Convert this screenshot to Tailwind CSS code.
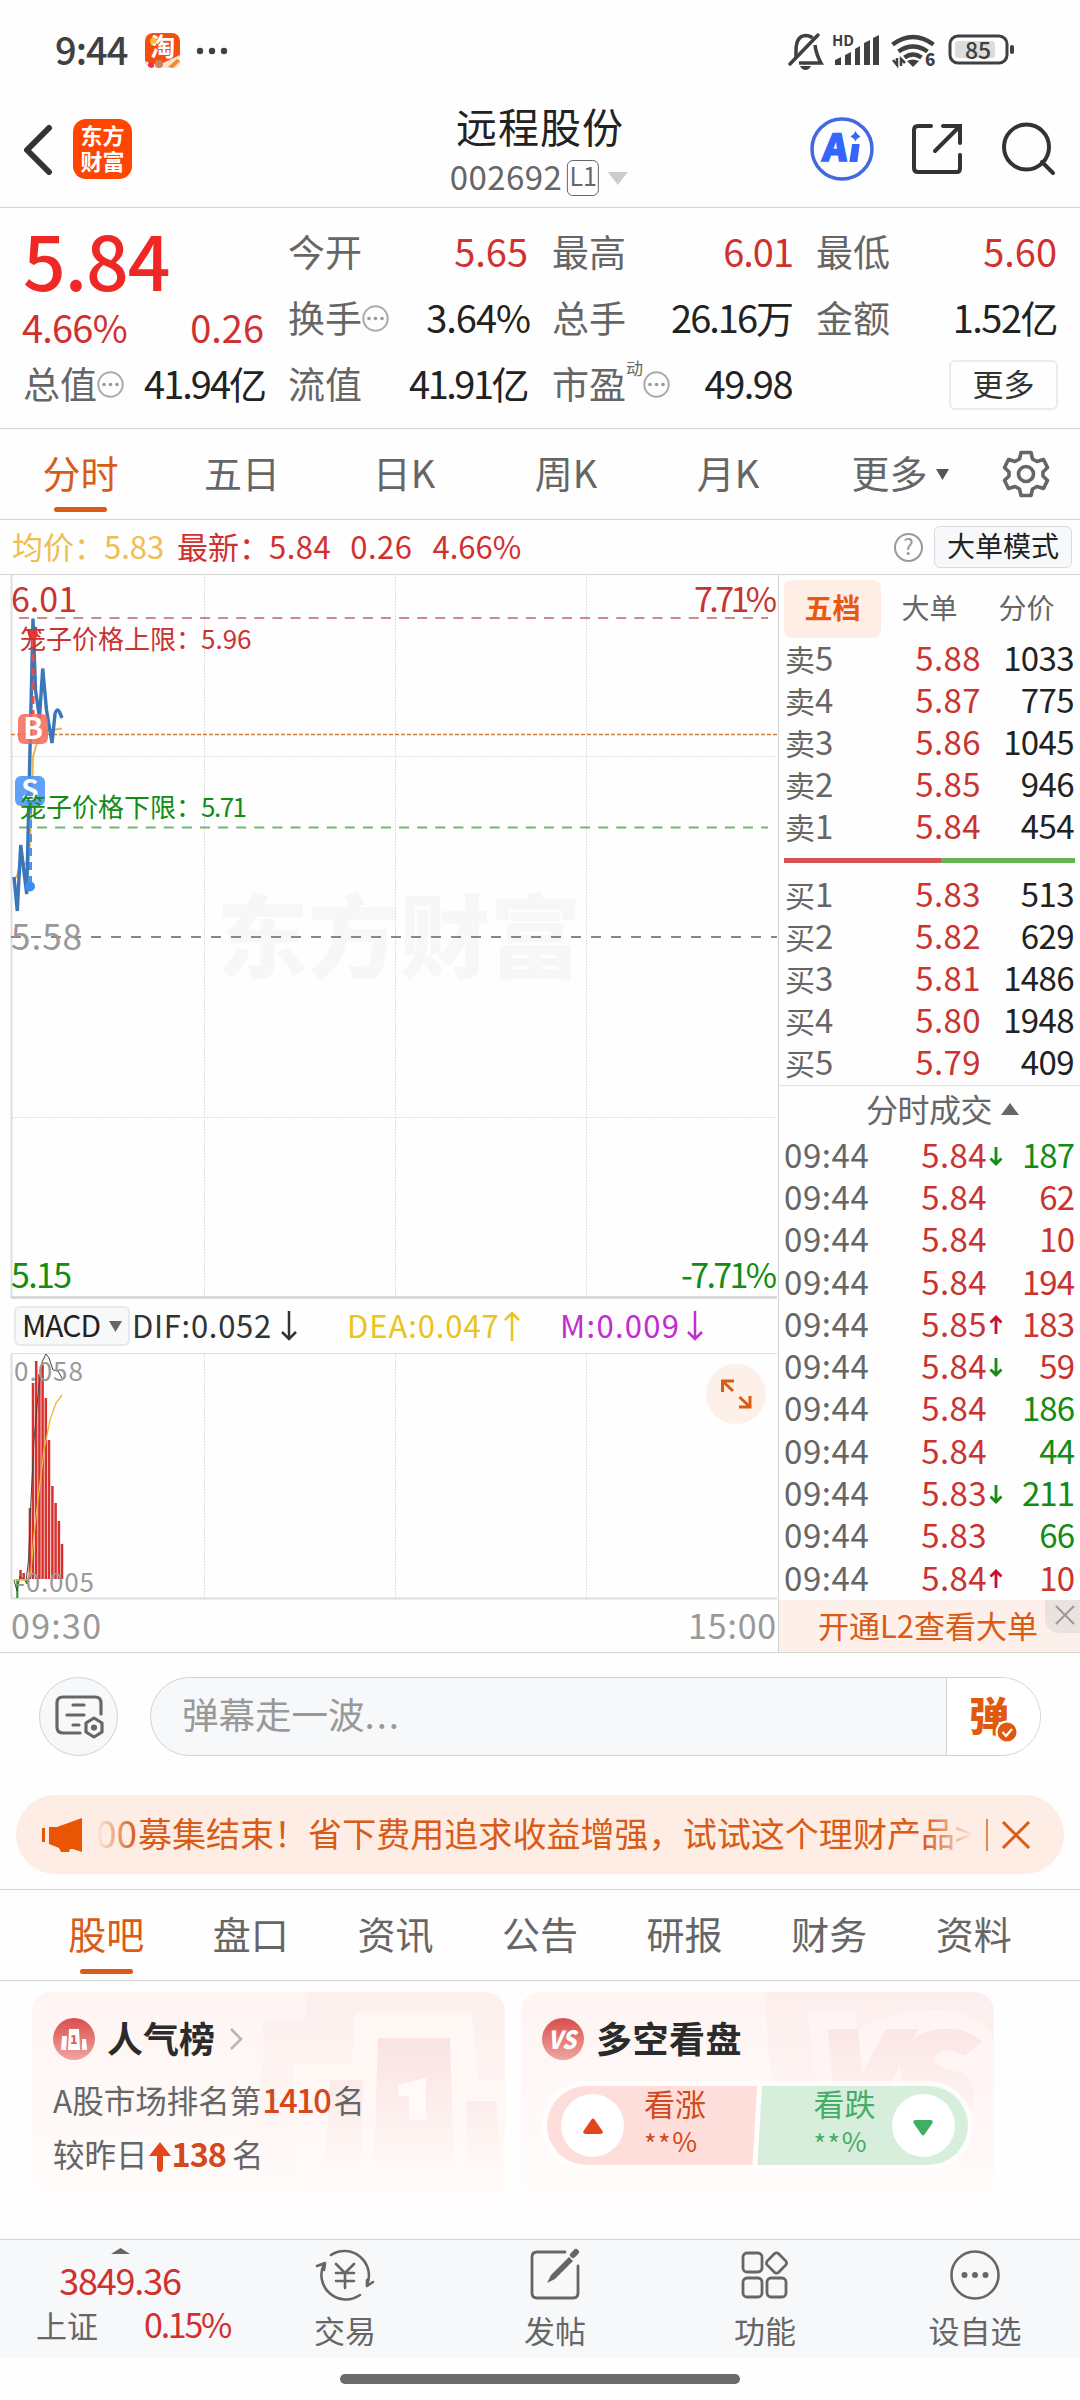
<!doctype html>
<html lang="zh-CN">
  <head>
    <meta charset="UTF-8" />
    <meta name="viewport" content="width=device-width, initial-scale=1.0" />
    <title>远程股份 002692</title>
    <script src="https://cdn.jsdelivr.net/npm/@tailwindcss/browser@4"></script>
  </head>
  <body class="w-[1080px] h-[2400px] overflow-hidden bg-[#fefefe] flex flex-col leading-none text-[#666] whitespace-nowrap font-['Noto_Sans_CJK_SC',sans-serif]">
    <!-- Status bar -->
    <div class="h-[100px] shrink-0 flex items-center pl-[55px] pr-[64px] pt-[1px] text-[#404040]">
      <span class="text-[38px] font-medium tracking-[-1px] pb-[4px]">9:44</span>
      <div class="relative ml-[18px] w-[35px] h-[35px] rounded-[8px] bg-[#f4500c] overflow-hidden flex justify-center">
        <span class="text-[25px] font-bold text-white">淘</span>
        <svg class="absolute left-0 top-0" width="35" height="35">
          <circle cx="8" cy="8" r="3" fill="#ffc21a" />
          <path d="M0 28q10 5 18 2l17-8v13H0z" fill="#ffe3d2" />
          <circle cx="6" cy="32" r="3" fill="#e8304a" />
          <circle cx="14" cy="31" r="4" fill="#c98560" />
          <path d="M23 34l9-8 3 2-7 7z" fill="#f08a30" />
        </svg>
      </div>
      <svg class="ml-[16px]" width="32" height="8" fill="#404040">
        <circle cx="4" cy="4" r="3.2" /><circle cx="16" cy="4" r="3.2" /><circle cx="28" cy="4" r="3.2" />
      </svg>
      <svg class="ml-auto" width="230" height="40" viewBox="786 31 230 40" fill="none" stroke="#404040">
        <path d="M796 58V51q0-15 9.500-15.500 4.500 0 7 2.500M815 45q1 9 6 18H799" stroke-width="3.500" />
        <path d="M790 64L818 35" stroke-width="3.500" stroke-linecap="round" />
        <path d="M800 66h11q-2 4-5.500 4t-5.500-4z" fill="#404040" stroke="none" />
        <g fill="#404040" stroke="none">
          <path d="M835 60l6-3v8h-6zM845 55l6-3v13h-6zM855 49l5-3v19h-5zM864 43l6-3v25h-6zM873 38l6-3v30h-6z" />
          <text x="832" y="46" font-size="15" font-weight="700" font-family="Noto Sans CJK SC">HD</text>
          <text x="925" y="66" font-size="17" font-weight="900" font-family="Noto Sans CJK SC">6</text>
          <path d="M907 61q6-3 12 0l-6 6z" />
        </g>
        <path d="M892.500 44.500q20.500-15 41 0M898.500 51.500q14.500-10 29 0M904.500 57.500q8.500-6 17 0" stroke-width="4.500" />
        <path d="M893 60l4 5v-7M901 66v-7l4 4" stroke-width="2.500" />
        <rect x="950" y="36" width="57" height="27" rx="8" stroke-width="3" />
        <rect x="955" y="41" width="40" height="17" rx="3" fill="#dcdcdc" stroke="none" />
        <rect x="1010" y="45" width="4" height="9" rx="2" fill="#404040" stroke="none" />
        <text x="978" y="58.500" text-anchor="middle" font-size="23" font-weight="500" fill="#404040" stroke="none" font-family="Noto Sans CJK SC">85</text>
      </svg>
    </div>

    <!-- Header -->
    <header class="relative h-[108px] shrink-0 border-b border-[#d4d4d4] flex items-center pl-[22px] pr-[22px]">
      <svg width="32" height="52" class="mb-[9px]" fill="none" stroke="#333" stroke-width="6" stroke-linecap="round" stroke-linejoin="round">
        <path d="M27 5L5 27l22 22" />
      </svg>
      <div class="ml-[19px] mb-[10px] w-[59px] h-[60px] rounded-[13px] bg-[#ff4500] text-white text-[22px] font-bold flex flex-col items-center justify-center gap-[4px] pb-[3px]">
        <span>东方</span><span>财富</span>
      </div>
      <div class="absolute left-1/2 -translate-x-1/2 top-[5px] flex flex-col items-center">
        <h1 class="text-[41px] tracking-[1px] text-[#222]">远程股份</h1>
        <div class="mt-[14px] ml-[-2px] flex items-center text-[33px] h-[36px]">
          <span class="pb-[3px] tracking-[0.400px]">002692</span>
          <span class="ml-[5px] w-[32px] h-[36px] border border-[#666] rounded-[6px] text-[25px] text-center leading-[29px]">L1</span>
          <svg class="ml-[9px]" width="20" height="13"><path d="M0 0h20L10 13z" fill="#ccc" /></svg>
        </div>
      </div>
      <svg class="ml-auto mb-[9px]" width="250" height="66" viewBox="808 116 250 66" fill="none" stroke="#333" stroke-width="4">
        <circle cx="842" cy="149" r="30" stroke="#4169e0" stroke-width="3.500" />
        <text x="841" y="161" font-size="37" font-weight="900" font-family="Noto Sans CJK SC" fill="#3366ff" stroke="#3366ff" stroke-width="1.500" text-anchor="middle" transform="skewX(-6) translate(10 0)">A</text>
        <path d="M853 145h5.500l-2 16h-6z" fill="#3366ff" stroke="#3366ff" stroke-width="2" />
        <path d="M855.500 131q1.500 4 5 5.500-3.500 1.500-5 5-1.500-3.500-5-5 3.500-1.500 5-5.500z" fill="#3366ff" stroke="none" />
        <path d="M931 126H918q-4 0-4 4v38q0 4 4 4h39q3 0 3-4V155M943 126h17v17M959 127l-24 24" stroke-linecap="round" />
        <circle cx="1026.500" cy="147" r="22.500" />
        <path d="M1042 162l11 11" stroke-linecap="round" />
      </svg>
    </header>

    <!-- Quote summary -->
    <section class="h-[221px] shrink-0 border-b border-[#d4d4d4] px-6 pt-[12px] flex gap-6 text-[37px]">
      <div class="w-[240px] flex flex-col">
        <div class="h-[66px] -ml-[1px] mt-[6px] text-[75px] font-medium text-[#ef2725] tracking-[-1px] leading-[66px]">5.84</div>
        <div class="h-[66px] mt-[16px] -mb-[22px] -ml-[2px] flex items-start justify-between text-[38px] text-[#d0312e]"><span class="tracking-[-0.800px]">4.66%</span><span>0.26</span></div>
        <div class="h-[66px] -ml-[1px] pb-[4px] flex items-center justify-between">
          <span class="flex items-center">总值<svg class="mt-[3px]" width="27" height="27"><use href="#more-dot" /></svg></span>
          <span class="text-[38px] text-[#222] tracking-[-2px] -mr-[1px]">41.94亿</span>
        </div>
      </div>
      <div class="w-[240px] flex flex-col">
        <div class="h-[66px] pb-[4px] flex items-center justify-between"><span>今开</span><span class="text-[38px] text-[#d0312e]">5.65</span></div>
        <div class="h-[66px] pb-[4px] flex items-center justify-between">
          <span class="flex items-center">换手<svg class="mt-[3px]" width="27" height="27"><use href="#more-dot" /></svg></span>
          <span class="text-[38px] text-[#222] tracking-[-1px] -mr-[2px]">3.64%</span>
        </div>
        <div class="h-[66px] pb-[4px] flex items-center justify-between"><span>流值</span><span class="text-[38px] text-[#222] tracking-[-2.500px] mr-[1px]">41.91亿</span></div>
      </div>
      <div class="w-[240px] flex flex-col">
        <div class="h-[66px] pb-[4px] flex items-center justify-between"><span>最高</span><span class="text-[38px] text-[#d0312e] tracking-[-1px] -mr-[1px]">6.01</span></div>
        <div class="h-[66px] pb-[4px] flex items-center justify-between"><span>总手</span><span class="text-[38px] text-[#222] tracking-[-2px]">26.16万</span></div>
        <div class="h-[66px] pb-[4px] flex items-center justify-between">
          <span class="flex items-center">市盈<span class="text-[17px] mb-[32px]">动</span><svg class="mt-[3px]" width="27" height="27"><use href="#more-dot" /></svg></span>
          <span class="text-[38px] text-[#222] tracking-[-1.500px]">49.98</span>
        </div>
      </div>
      <div class="w-[240px] flex flex-col">
        <div class="h-[66px] pb-[4px] flex items-center justify-between"><span>最低</span><span class="text-[38px] text-[#d0312e] -mr-[1px]">5.60</span></div>
        <div class="h-[66px] pb-[4px] flex items-center justify-between"><span>金额</span><span class="text-[38px] text-[#222] tracking-[-1.500px] -mr-[1px]">1.52亿</span></div>
        <div class="h-[66px] pb-[1px] flex items-center justify-end"><span class="w-[109px] h-[50px] -mr-[2px] border-2 border-[#ebebeb] rounded-[6px] text-[31px] text-[#333] text-center leading-[42px]">更多</span></div>
      </div>
    </section>

    <!-- Period tabs -->
    <nav class="h-[91px] shrink-0 border-b border-[#d4d4d4] flex items-center text-[38px]">
      <div class="relative w-[161px] h-full flex items-center justify-center pb-[4px] text-[#d95b16]">分时<i class="absolute bottom-[7px] w-[53px] h-[5px] rounded-full bg-[#d95b16]"></i></div>
      <div class="w-[162px] text-center pb-[4px]">五日</div>
      <div class="w-[162px] text-center pb-[4px]">日K</div>
      <div class="w-[162px] text-center pb-[4px]">周K</div>
      <div class="w-[162px] text-center pb-[4px]">月K</div>
      <div class="w-[182px] flex items-center justify-center"><span class="pb-[4px]">更多</span><svg class="ml-[8px]" width="13" height="11"><path d="M0 0h13L6.500 11z" fill="#555" /></svg></div>
      <svg class="ml-[11px]" width="48" height="48" viewBox="-24 -24 48 48" fill="none" stroke="#666" stroke-width="3.600" stroke-linejoin="round">
        <path d="M-5-21.500H5L6.500-15 11-12.500 17.500-14.500 21.500-6.500 17-2V2L21.500 6.500 17.500 14.500 11 12.500 6.500 15 5 21.500H-5L-6.500 15-11 12.500-17.500 14.500-21.500 6.500-17 2V-2L-21.500-6.500-17.500-14.500-11-12.500-6.500-15z" />
        <circle r="7.500" />
      </svg>
    </nav>

    <div class="h-[55px] shrink-0 border-b border-[#d4d4d4] flex items-center pl-[12px] pr-[8px] text-[31px] text-[#d0312e]">
      <span class="pb-[3px] w-[92px] text-[#f0bd50]">均价：</span>
      <span class="pb-[3px] w-[62px] text-[#f0bd50]">5.83</span>
      <span class="pb-[3px] ml-[11px] w-[92px]">最新：</span>
      <span class="pb-[3px] tracking-[0.500px]">5.84</span>
      <span class="pb-[3px] ml-[19px] tracking-[0.500px]">0.26</span>
      <span class="pb-[3px] ml-[20px]">4.66%</span>
      <span class="ml-auto w-[29px] h-[29px] rounded-full border-2 border-[#999] text-[#999] text-[22px] text-center leading-[21px]">?</span>
      <span class="ml-[11px] w-[138px] h-[42px] rounded-[6px] border border-[#d8dbe2] bg-[#f7f8fa] text-[#222] text-[28px] text-center leading-[36px]">大单模式</span>
    </div>

    <!-- Chart and order book -->
    <main class="h-[1078px] shrink-0 border-b border-[#d4d4d4] flex">
      <div class="w-[778px] flex flex-col">
        <svg width="778" height="724" viewBox="0 575 778 724" fill="none" font-family="Noto Sans CJK SC">
          <text x="217" y="971" font-size="91" font-weight="900" fill="#f7f7f7">东方财富</text>
          <path d="M11.500 574V1298" stroke="#dedede" stroke-width="2" />
          <path d="M11 1297.500H777" stroke="#d4d4d4" stroke-width="2.500" />
          <path d="M204.500 574V1297M395.500 574V1297M586.500 574V1297M12 756.500H777M12 1117.500H777" stroke="#d5d5d5" stroke-dasharray="1.500 1.500" />
          <path d="M19 618H768" stroke="#c98b8b" stroke-width="2" stroke-dasharray="10 8.100" />
          <path d="M19 827.500H768" stroke="#74b574" stroke-width="2" stroke-dasharray="10 8.100" />
          <path d="M11 937H777" stroke="#888" stroke-width="2" stroke-dasharray="10 10" />
          <path d="M11 734.500H777" stroke="#c9803f" stroke-width="1.500" stroke-dasharray="4 2" />
          <path d="M14 880L17 876 21 862 25 864 29 860 31 820 33 757 36 746 40 736 46 731 62 728.500" stroke="#eab64b" stroke-width="2" />
          <path d="M14 877L17.300 911 20.700 845 26.700 894 33 618.500 35.500 690 39.500 718 42.700 668.500 46.500 710 52 743 55 714Q57 707 59.500 712L62 718" stroke="#3a76b8" stroke-width="3.400" stroke-linejoin="bevel" />
          <circle cx="33" cy="634" r="5" fill="#ee3a36" />
          <path d="M33 640V714" stroke="#e0504e" stroke-width="3" stroke-dasharray="8 6" />
          <path d="M30.500 806V882" stroke="#4a90ee" stroke-width="3" stroke-dasharray="8 6" />
          <circle cx="30" cy="886.500" r="5" fill="#3d8bf5" />
          <rect x="18" y="714" width="30" height="30" rx="6" fill="#f5695a" fill-opacity=".85" />
          <text x="33" y="739" text-anchor="middle" font-size="29" font-weight="700" fill="#fff">B</text>
          <rect x="15" y="776" width="30" height="30" rx="6" fill="#4b93f8" fill-opacity=".88" />
          <text x="30" y="800" text-anchor="middle" font-size="28" font-weight="700" fill="#fff">S</text>
          <g fill="#c93330">
            <text x="11" y="612" font-size="34">6.01</text>
            <text x="777" y="612" text-anchor="end" font-size="34" textLength="83">7.71%</text>
            <text x="20" y="649" font-size="26">笼子价格上限：</text>
            <text x="201" y="649" font-size="26">5.96</text>
          </g>
          <g fill="#138c13">
            <text x="20" y="817" font-size="26">笼子价格下限：</text>
            <text x="201" y="817" font-size="26" textLength="46">5.71</text>
            <text x="11" y="1288" font-size="34" textLength="61">5.15</text>
            <text x="777" y="1288" text-anchor="end" font-size="34" textLength="96">-7.71%</text>
          </g>
          <text x="11" y="950" font-size="35" fill="#999" textLength="71">5.58</text>
        </svg>
        <div class="h-[54px] flex items-center pl-[14px] text-[31px] text-[#333]">
          <div class="w-[116px] h-[40px] rounded-[6px] border-2 border-[#e8e9ec] bg-[#f7f8fa] flex items-center pl-[6px]">
            <span class="text-[30px] tracking-[-1px] pb-[4px] text-[#222]">MACD</span>
            <svg class="ml-[9px]" width="13" height="11"><path d="M0 0h13L6.500 11z" fill="#666" /></svg>
          </div>
          <span class="ml-[2px] w-[149px] pb-[4px] tracking-[0.700px]">DIF:0.052</span>
          <svg width="16" height="30" fill="none" stroke="#333" stroke-width="2.500"><path d="M8 0v28M1 21l7 7 7-7" /></svg>
          <span class="ml-[50px] w-[157px] pb-[4px] tracking-[0.900px] text-[#e9c321]">DEA:0.047</span>
          <svg width="16" height="30" fill="none" stroke="#e9c321" stroke-width="2.500"><path d="M8 30V2M1 9l7-7 7 7" /></svg>
          <span class="ml-[40px] w-[127px] pb-[4px] tracking-[1.300px] text-[#c42bd0]">M:0.009</span>
          <svg width="16" height="30" fill="none" stroke="#c42bd0" stroke-width="2.500"><path d="M8 0v28M1 21l7 7 7-7" /></svg>
        </div>
        <svg width="778" height="248" viewBox="0 1353 778 248" fill="none" font-family="Noto Sans CJK SC">
          <path d="M11 1353.500H777" stroke="#dedede" />
          <path d="M11.500 1354V1599" stroke="#dedede" stroke-width="2" />
          <path d="M11 1598.500H777" stroke="#dedede" stroke-width="2" />
          <path d="M204.500 1354V1598M395.500 1354V1598M586.500 1354V1598" stroke="#d5d5d5" stroke-dasharray="1.500 1.500" />
          <path d="M20.500 1570V1579M23.700 1573V1579M29.900 1508V1579M33 1383V1579M36.200 1361V1579M39.400 1374V1579M42.600 1365V1579M45.800 1398V1579M49 1440V1579M52.400 1486V1579M55.600 1503V1579M58.900 1521V1579M62 1544V1579" stroke="#d8302c" stroke-width="2.500" />
          <path d="M17.300 1579V1598M26.700 1579V1584" stroke="#1a9a1a" stroke-width="2" />
          <path d="M14 1580L17 1591 20 1576 26 1582 28.500 1560 31 1500 34 1440 38 1395 42 1362 46 1354 49 1358 53 1370 58 1371 62 1378" stroke="#444" />
          <path d="M14 1580H28L31 1570 34 1535 38 1500 44 1450 50 1420 56 1403 62 1395" stroke="#edb92e" stroke-width="1.300" />
          <text x="14" y="1381" font-size="26" fill="#999" textLength="69">0.058</text>
          <text x="16" y="1592" font-size="26" fill="#999" textLength="78">-0.005</text>
          <circle cx="736" cy="1394" r="30" fill="#fdf0e8" />
          <path d="M722.500 1392V1381H734M723 1381.500L733 1391M750 1396V1407H739M749.500 1406.500L739.500 1397" stroke="#d95b16" stroke-width="3" />
        </svg>
        <div class="flex-1 flex items-center justify-between pl-[11px] pr-[1px] pb-[3px] text-[34px] text-[#999]">
          <span class="tracking-[1.300px]">09:30</span><span class="tracking-[0.800px]">15:00</span>
        </div>
      </div>

      <aside class="w-[302px] border-l border-[#d4d4d4] flex flex-col">
        <div class="mt-[5px] mb-[1px] h-[58px] ml-[5px] flex text-[28px]">
          <div class="w-[97px] h-[58px] rounded-[8px] bg-[#ffeee5] text-[#e8590f] font-bold flex items-center justify-center pb-[4px]">五档</div>
          <div class="w-[97px] flex items-center justify-center pb-[4px]">大单</div>
          <div class="w-[97px] flex items-center justify-center pb-[4px]">分价</div>
        </div>
        <div id="asks"></div>
        <div class="mt-[9px] mb-[12px] mx-[5px] h-[5px] flex">
          <i class="w-[157px] bg-[#d35452]"></i><i class="flex-1 bg-[#65b352]"></i>
        </div>
        <div id="bids"></div>
        <div class="h-[49px] border-t border-[#e2e2e2] flex items-center justify-center text-[32px] pl-[26px]">
          <span class="tracking-[-0.500px] pb-[4px]">分时成交</span><svg class="ml-[9px] mb-[2px]" width="18" height="12"><path d="M0 12h18L9 0z" fill="#666" /></svg>
        </div>
        <div class="mt-[1px]" id="trades"></div>
        <div class="relative flex-1 bg-[#fdf0ea] text-[#d95b16] text-[31px] flex items-center pl-[39px] pb-[4px]">
          开通L2查看大单
          <div class="absolute right-0 top-0 w-[35px] h-[33px] rounded-bl-[14px] bg-[#eae2de] flex items-center justify-center pl-[4px] pb-[3px]">
            <svg width="20" height="20" stroke="#999" stroke-width="2"><path d="M1 1l18 18M19 1L1 19" /></svg>
          </div>
        </div>
      </aside>
    </main>

    <!-- Comment bar -->
    <div class="h-[142px] shrink-0 flex items-start pt-[24px] pl-[39px]">
      <div class="w-[79px] h-[79px] rounded-full border border-[#d0d2d6] bg-[#f7f8fa] flex items-center justify-center">
        <svg width="50" height="46" viewBox="0 0 50 46" fill="none" stroke="#666" stroke-width="3.200" stroke-linecap="round">
          <path d="M47 20V9q0-6-6-6H9q-6 0-6 6v24q0 6 6 6h17M19 11h11M13 21h17M19 31h6" />
          <path d="M40 24l8 5v9l-8 5-8-5v-9z" stroke-linejoin="round" /><circle cx="40" cy="33.500" r="1.500" fill="#666" />
        </svg>
      </div>
      <div class="ml-[32px] w-[891px] h-[79px] rounded-full border border-[#d0d2d6] bg-[#f7f8fa] overflow-hidden flex">
        <div class="flex-1 pl-[31px] pb-[5px] flex items-center text-[36.500px] text-[#999]">弹幕走一波<span class="tracking-[2px]">...</span></div>
        <div class="relative w-[94px] border-l border-[#d0d2d6] bg-white flex items-center pl-[22px] pb-[6px] text-[40px] font-black text-[#e0590f]">弹
          <svg class="absolute left-[48px] top-[42px]" width="24" height="24"><circle cx="12" cy="12" r="10.500" fill="#e0590f" stroke="#fff" stroke-width="2" /><path d="M7.500 12l3.500 4 6-7" fill="none" stroke="#fff" stroke-width="2.200" /></svg>
        </div>
      </div>
    </div>

    <!-- Notice -->
    <div class="mx-[16px] h-[79px] shrink-0 rounded-full bg-[#fdede4] flex items-center text-[34px] text-[#d95b16]">
      <svg class="ml-[25px]" width="41" height="36" fill="#ea5504"><path d="M1 11h3v14H1zM8 10h8L41 1v34l-9-3h-3l-1 3h-8l-2-4-10-4z" /></svg>
      <div class="relative ml-[14px] w-[878px] h-full overflow-hidden flex items-center pb-[4px]">
        <span class="text-[37px] w-[42px]">00</span><span class="tracking-[0.050px]">募集结束！省下费用追求收益增强，试试这个理财产品&gt;</span>
        <i class="absolute left-0 top-0 w-[40px] h-full bg-linear-to-r from-[#fdede4] to-[#fdede4]/0"></i>
        <i class="absolute right-0 top-0 w-[50px] h-full bg-linear-to-l from-[#fdede4] to-[#fdede4]/0"></i>
      </div>
      <i class="ml-[12px] w-[2px] h-[32px] bg-[#e08a58]"></i>
      <svg class="ml-[13px]" width="30" height="30" stroke="#d95b16" stroke-width="3"><path d="M2 2l26 26M28 2L2 28" /></svg>
    </div>

    <!-- Content tabs -->
    <nav class="mt-[15px] h-[92px] shrink-0 border-y border-[#d4d4d4] px-[34px] grid grid-cols-7 text-[38px]">
      <div class="relative flex items-center justify-center pb-[5px] text-[#d95b16]">股吧<i class="absolute bottom-[6px] w-[53px] h-[5px] rounded-full bg-[#d95b16]"></i></div>
      <div class="flex items-center justify-center pb-[5px]">盘口</div>
      <div class="flex items-center justify-center pb-[5px]">资讯</div>
      <div class="flex items-center justify-center pb-[5px]">公告</div>
      <div class="flex items-center justify-center pb-[5px]">研报</div>
      <div class="flex items-center justify-center pb-[5px]">财务</div>
      <div class="flex items-center justify-center pb-[5px]">资料</div>
    </nav>

    <!-- Cards -->
    <div class="h-[258px] shrink-0 pt-[11px] pl-[32px] flex gap-[16px]">
      <div class="relative w-[473px] h-[210px] rounded-[20px] overflow-hidden bg-linear-to-b from-[#fef5f3] to-[#fffcfb] pl-[21px]">
        <svg class="absolute right-0 top-0" width="260" height="210" viewBox="213 0 260 210">
          <defs>
            <linearGradient id="fade" x1="0" y1="0" x2="0" y2="1"><stop offset="0" stop-color="#fae3e1" /><stop offset="1" stop-color="#fef8f6" /></linearGradient>
            <linearGradient id="badge" x1="0" y1="0" x2="0" y2="1"><stop offset="0" stop-color="#d84f4c" /><stop offset="1" stop-color="#f0a5a0" /></linearGradient>
            <symbol id="more-dot" viewBox="0 0 27 27">
              <circle cx="13.500" cy="13.500" r="12.200" fill="none" stroke="#aaa" stroke-width="2" />
              <g fill="#999"><circle cx="7" cy="13.500" r="1.800" /><circle cx="13.500" cy="13.500" r="1.800" /><circle cx="20" cy="13.500" r="1.800" /></g>
            </symbol>
          </defs>
          <path d="M275 0H473V180L213 190 231 72V27H274z" fill="url(#fade)" opacity=".32" />
          <path d="M262 72H320L323 21H440L446 88H473V200H262z" fill="#fff9f7" opacity=".7" />
          <path d="M298 88h33l-2 84h-36zM346 46h72l4 126h-80zM434 109h30l5 63h-33z" fill="url(#fade)" />
          <path d="M366 93l28-7v42h-17v-24h-11z" fill="#fff9f7" />
        </svg>
        <div class="relative mt-[26px] flex items-center text-[36px] font-bold text-[#2b2b2b]">
          <svg width="42" height="42"><circle cx="21" cy="21" r="21" fill="url(#badge)" /><path d="M9 18h5l-1 14H8zM16 11h10l1 21H15zM29 21h4l1 11h-5z" fill="#fff" /><text x="21" y="26" font-size="12" font-weight="900" fill="#d9605c" text-anchor="middle">1</text></svg>
          <span class="ml-[12px] pb-[5px]">人气榜</span>
          <svg class="ml-[14px]" width="14" height="22" fill="none" stroke="#b5b5b5" stroke-width="2.500"><path d="M2 1l10 10L2 21" /></svg>
        </div>
        <div class="relative mt-[23px] text-[31.500px]">A股市场排名第<b class="text-[#d4481c] font-medium tracking-[-1.500px] ml-[1px] text-[32.500px]">1410</b><span class="ml-[3px]">名</span></div>
        <div class="relative mt-[21px] text-[31.500px] flex items-center">较昨日<svg class="mx-[1px] mt-[5px]" width="22" height="30"><path d="M11 0l11 14h-8v12q0 4-3 4t-3-4V14H0z" fill="#e2461a" /></svg><b class="text-[#d4481c] font-bold tracking-[-1px] text-[32.500px] pb-[1px]">138</b><span class="ml-[6px]">名</span></div>
      </div>

      <div class="relative w-[473px] h-[210px] rounded-[20px] overflow-hidden bg-linear-to-b from-[#fef5f3] to-[#fffcfb] pl-[21px]">
        <svg class="absolute right-0 top-0" width="240" height="210" viewBox="233 0 240 210">
          <path d="M243 0H473V180H258z" fill="url(#fade)" opacity=".35" />
          <path d="M287 20h46l4 18q30-20 80-20 40 0 56 30v120H300z" fill="#fff7f5" opacity=".7" />
          <path d="M307 37h30l4 44 24-44h32l-52 106h-30z" fill="url(#fade)" opacity=".8" />
          <path d="M461 50L444 64q-26-12-31 3 2 9 22 12 24 6 17 34-10 28-48 28-24 0-38-14l16-20q18 14 32 6 4-9-14-12-26-6-20-32 8-31 42-32 22-2 39 13z" fill="url(#fade)" opacity=".8" />
        </svg>
        <div class="relative mt-[26px] flex items-center text-[36px] font-bold text-[#2b2b2b]">
          <svg width="42" height="42"><circle cx="21" cy="21" r="21" fill="url(#badge)" /><text x="20" y="30.500" font-size="25" font-weight="900" font-style="italic" fill="#fff" text-anchor="middle" textLength="28" lengthAdjust="spacingAndGlyphs">VS</text></svg>
          <span class="ml-[12px] pb-[5px] tracking-[0.500px]">多空看盘</span>
        </div>
        <div class="absolute left-[21px] top-[89px] w-[431px] h-[89px] rounded-full bg-white/70"></div>
        <div class="absolute left-[26px] top-[94px] w-[421px] h-[79px] rounded-full overflow-hidden flex">
          <svg class="absolute left-0 top-0" width="421" height="79"><path d="M0 0H210l-4.500 79H0z" fill="#fddedb" /><path d="M215 0H421V79H210.500z" fill="#d7eedd" /></svg>
          <div class="relative flex w-1/2 pl-[14px]">
            <div class="mt-[8px] w-[63px] h-[63px] rounded-full bg-white flex items-center justify-center"><svg width="20" height="16"><path d="M8.500 1.500q1.500-2 3 0l8 11.500q1 3-2 3h-15q-3 0-2-3z" fill="#e2461a" /></svg></div>
            <div class="ml-[20px] text-[31px] text-[#d4481c]"><div class="mt-[1px]">看涨</div><div class="mt-[9px] text-[27px]"><span class="inline-block translate-y-[3px] tracking-[1.500px]">**</span>%</div></div>
          </div>
          <div class="relative flex w-1/2 pl-[56px]">
            <div class="text-[31px] text-[#46ad66]"><div class="mt-[1px]">看跌</div><div class="mt-[9px] text-[27px]"><span class="inline-block translate-y-[3px] tracking-[1.500px]">**</span>%</div></div>
            <div class="ml-[16px] mt-[8px] w-[63px] h-[63px] rounded-full bg-white flex items-center justify-center"><svg class="mt-[4px]" width="20" height="16"><path d="M8.500 14.500q1.500 2 3 0l8-11.500q1-3-2-3h-15q-3 0-2 3z" fill="#3fb061" /></svg></div>
          </div>
        </div>
      </div>
    </div>

    <!-- Bottom bar -->
    <footer class="h-[119px] shrink-0 border-t border-[#d4d4d4] bg-[#f7f8fa] flex text-[31px]">
      <div class="w-[240px] flex flex-col items-center">
        <svg class="mt-[8px]" width="19" height="6"><path d="M0 6h19L9.500 0z" fill="#666" /></svg>
        <span class="mt-[7px] text-[36px] tracking-[-1.200px] text-[#d0312e]">3849.36</span>
        <div class="mt-[10px] w-[194px] ml-[26px] flex items-center justify-between"><span>上证</span><span class="text-[34px] tracking-[-2.300px] text-[#d0312e]">0.15%</span></div>
      </div>
      <div class="w-[210px] flex flex-col items-center pt-[8px]">
        <svg width="60" height="54" viewBox="-30 -27 60 54" fill="none" stroke="#666" stroke-width="2.600" stroke-linecap="round" stroke-linejoin="round">
          <path d="M-14-20A24.500 24.500 0 0 1 22 10M22 11l6-4M22 11l0-6M15 20A24.500 24.500 0 0 1-21-11M-28-9l8-3-1 7" />
          <path d="M-9-11L0-2 9-11M0-2V13M-9-2H9M-9 6H9" />
        </svg>
        <span class="mt-[12px]">交易</span>
      </div>
      <div class="w-[210px] flex flex-col items-center pt-[8px]">
        <svg width="54" height="54" viewBox="-27 -27 54 54" fill="none" stroke="#666" stroke-width="2.800">
          <path d="M10-23H-18q-5 0-5 5V18q0 5 5 5H18q5 0 5-5V-9" stroke-linecap="round" />
          <path d="M-8 8l4-8L14-18l4 4L0 4z" fill="#666" stroke="none" /><path d="M18-20l3-3" stroke-width="6" stroke-linecap="round" />
        </svg>
        <span class="mt-[12px]">发帖</span>
      </div>
      <div class="w-[210px] flex flex-col items-center pt-[8px]">
        <svg width="54" height="54" viewBox="-27 -27 54 54" fill="none" stroke="#666" stroke-width="2.800">
          <rect x="-22" y="-22" width="19" height="19" rx="4" /><rect x="-22" y="3" width="19" height="19" rx="4" /><rect x="2" y="3" width="19" height="19" rx="4" />
          <rect x="3.500" y="-20" width="16" height="16" rx="3" transform="rotate(45 11.500 -12)" />
        </svg>
        <span class="mt-[12px]">功能</span>
      </div>
      <div class="w-[210px] flex flex-col items-center pt-[8px]">
        <svg width="54" height="54" viewBox="-27 -27 54 54" fill="#666">
          <circle r="23.500" fill="none" stroke="#666" stroke-width="2.600" /><circle cx="-10.500" r="3" /><circle r="3" /><circle cx="10.500" r="3" />
        </svg>
        <span class="mt-[12px]">设自选</span>
      </div>
    </footer>
    <div class="mt-[16px] mx-auto w-[400px] h-[10px] shrink-0 rounded-full bg-[#6b6b6b]"></div>

    <script>
      const asks = [["卖5", "5.88", 1033], ["卖4", "5.87", 775], ["卖3", "5.86", 1045], ["卖2", "5.85", 946], ["卖1", "5.84", 454]];
      const bids = [["买1", "5.83", 513], ["买2", "5.82", 629], ["买3", "5.81", 1486], ["买4", "5.80", 1948], ["买5", "5.79", 409]];
      // price, direction, volume, side
      const trades = [
        ["5.84", "down", 187, "sell"],
        ["5.84", "", 62, "buy"],
        ["5.84", "", 10, "buy"],
        ["5.84", "", 194, "buy"],
        ["5.85", "up", 183, "buy"],
        ["5.84", "down", 59, "buy"],
        ["5.84", "", 186, "sell"],
        ["5.84", "", 44, "sell"],
        ["5.83", "down", 211, "sell"],
        ["5.83", "", 66, "sell"],
        ["5.84", "up", 10, "buy"],
      ];
      const arrows = {
        down: '<path d="M7 1v17M1.500 12.500L7 18l5.500-5.500" stroke="#138c13" />',
        up: '<path d="M7 19V2M1.500 7.500L7 2l5.500 5.500" stroke="#c8102e" />',
        "": "",
      };

      function level([name, price, volume]) {
        return `<div class="h-[42px] pb-[5px] pl-[6px] pr-[6px] flex items-center text-[33px]">
          <span class="w-[80px] text-[30px]">${name[0]}<span class="text-[33px]">${name[1]}</span></span>
          <span class="w-[116px] text-right text-[#c93330] tracking-[0.400px]">${price}</span>
          <span class="flex-1 text-right text-[#222] tracking-[-0.600px]">${volume}</span>
        </div>`;
      }

      function trade([price, dir, volume, side]) {
        const color = side === "buy" ? "text-[#c93330]" : "text-[#138c13]";
        return `<div class="h-[42.300px] pb-[4px] pl-[5px] pr-[6px] flex items-center text-[33px]">
          <span class="w-[100px] tracking-[0.600px]">09:44</span>
          <span class="w-[103px] text-right text-[#c93330] tracking-[0.400px]">${price}</span>
          <svg class="ml-[2px] mt-[3px]" width="14" height="20" fill="none" stroke-width="2.800">${arrows[dir]}</svg>
          <span class="flex-1 text-right tracking-[-1px] ${color}">${volume}</span>
        </div>`;
      }

      document.getElementById("asks").innerHTML = asks.map(level).join("");
      document.getElementById("bids").innerHTML = bids.map(level).join("");
      document.getElementById("trades").innerHTML = trades.map(trade).join("");
    </script>
  </body>
</html>
